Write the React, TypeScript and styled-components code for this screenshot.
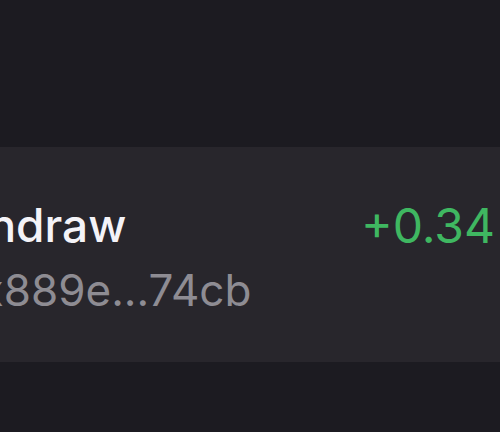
import React from 'react';
import styled, {createGlobalStyle} from 'styled-components';
import {Wallet} from 'lucide-react';

const GlobalStyle = createGlobalStyle`
    html, body {
        margin: 0;
        padding: 0;
        background: #1c1b21;
    }
    body {
        font-family: Inter, "Noto Sans", sans-serif;
        -webkit-font-smoothing: antialiased;
    }
`

type Tx = {
    title: string
    address: string
    amount: string
    incoming: boolean
}

const tx: Tx = {
    title: 'Withdraw',
    address: '0x889e...74cb',
    amount: '+0.34 ETH',
    incoming: true,
}

export default function App() {
    return (
        <>
            <GlobalStyle/>
            <Screen>
                <Card>
                    <Info>
                        <Title>{tx.title}</Title>
                        <AddressRow>
                            <Wallet size={14} strokeWidth={2}/>
                            <Address>{tx.address}</Address>
                        </AddressRow>
                    </Info>
                    <Amount incoming={tx.incoming}>{tx.amount}</Amount>
                </Card>
            </Screen>
        </>
    );
}

const Screen = styled.div`
    width: 500px;
    height: 432px;
    overflow: hidden;
    padding-top: 147px;
    box-sizing: border-box;
    background: #1c1b21;
`

const Card = styled.div`
    display: flex;
    justify-content: space-between;
    align-items: flex-start;
    height: 215px;
    box-sizing: border-box;
    width: 800px;
    margin-left: -85px;
    padding: 52px 0 0 0;
    background: #28262c;
`

const Info = styled.div`
    display: flex;
    flex-direction: column;
    gap: 12px;
`

const Title = styled.span`
    font-size: 46px;
    line-height: 53px;
    font-weight: 500;
    color: #f4f3f8;
`

const AddressRow = styled.div`
    display: flex;
    align-items: center;
    gap: 23px;
    color: #8e8c93;
`

const Address = styled.span`
    font-size: 44px;
    line-height: 53px;
`

const Amount = styled.span<{incoming: boolean}>`
    margin-right: 111px;
    font-size: 48px;
    line-height: 53px;
    color: ${p => p.incoming ? '#3fb761' : '#f4f3f8'};
`
